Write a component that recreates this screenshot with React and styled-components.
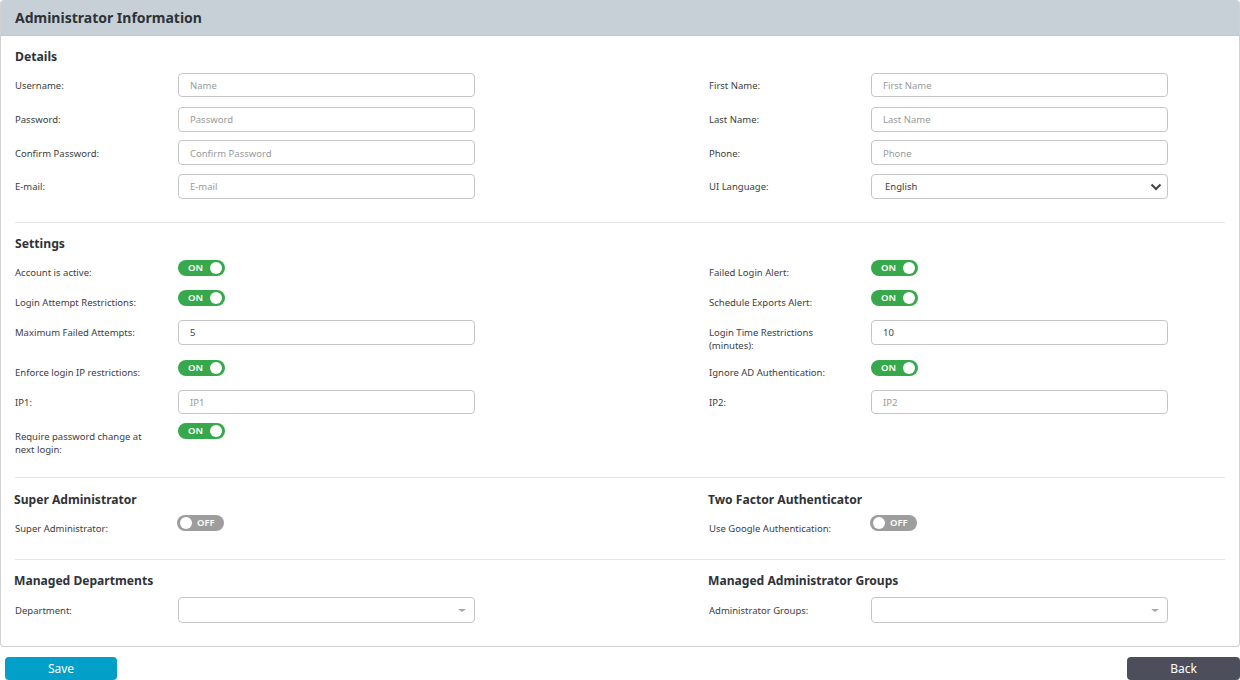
import React from "react";
import styled, { createGlobalStyle } from "styled-components";

const Global = createGlobalStyle`
  html, body { margin: 0; padding: 0; background: #fff; }
  body { font-family: "Noto Sans", "Open Sans", sans-serif; color: #333; overflow: hidden; }
  * { box-sizing: border-box; }
`;
const Page = styled.div`width: 1240px; height: 680px; display: flex; flex-direction: column;`;
const Panel = styled.div`
  height: 647px; border: 1px solid #d0d0d0; border-top: 0; border-radius: 4px; overflow: hidden; background: #fff;
`;
const PanelHeader = styled.h1`
  margin: 0 -1px; height: 36px; background: #c8d0d7; padding-left: 15px; display: flex; align-items: center;
  font-size: 14px; font-weight: 700; color: #2d3238; border-bottom: 1px solid #c2cad1;
`;
const Section = styled.section`
  padding: ${p => p.$pt}px 14px 0 14px;
`;
const Divider = styled.hr`
  margin: ${p => p.$mt}px 14px 0 14px; border: 0; border-top: 1px solid #e4e4e4;
`;
const Title = styled.h2`
  margin: 0; font-size: 12.2px; line-height: 18px; font-weight: 700; color: #2f3338;
`;
const SubTitle = styled(Title)`
  margin-left: -1px; font-size: 12.1px;
`;
const TwoCol = styled.div`
  display: grid; grid-template-columns: 694px 1fr; margin-top: ${p => p.$mt ?? 0}px;
`;
const Field = styled.div`
  display: grid; grid-template-columns: 163px 297px; align-items: start; min-height: ${p => p.$h ?? 0}px;
`;
const RightField = styled(Field)`grid-template-columns: 162px 297px;`;
const Label = styled.label`
  font-size: 9.5px; line-height: 13px; color: #3d3d3d; padding-top: ${p => p.$pt ?? 6}px; padding-right: 10px;
`;
const TextInput = styled.input`
  width: 297px; height: ${p => p.$h ?? 25}px; border: 1px solid #c6c6c6; border-radius: 4px;
  padding: ${p => p.$nudge ?? 0}px 11px 0;
  font: 9.5px "Noto Sans", sans-serif; color: #444; background: #fff; outline: none;
  &::placeholder { color: #9a9a9a; opacity: 1; }
`;
const SelectBox = styled.div`
  width: 297px; height: ${p => p.$h ?? 25}px; border: 1px solid #c6c6c6; border-radius: 4px; padding: 0 5px 0 13px;
  display: flex; align-items: center; justify-content: space-between; font-size: 9.5px; color: #3d3d3d; background: #fff;
`;
const ChevronIcon = () => (
  <svg width="12" height="8" viewBox="0 0 12 8"><path d="M1.500 1.500 6 6l4.500-4.500" fill="none" stroke="#444" strokeWidth="2" /></svg>
);
const Caret = styled.span`
  width: 0; height: 0; margin-right: 3px; border-left: 4px solid transparent; border-right: 4px solid transparent; border-top: 3.500px solid #a6a6a6;
`;
const Track = styled.div`
  position: relative; width: 47px; height: 16px; border-radius: 8px; background: ${p => (p.$on ? "#38a84c" : "#9d9d9d")};
  color: #fff; font-size: 9.5px; font-weight: 600; line-height: 16px; margin-left: ${p => (p.$on ? 0 : -1)}px;
  padding-left: ${p => (p.$on ? 10 : 20)}px;
  &::after {
    content: ""; position: absolute; top: 2px; ${p => (p.$on ? "right: 3px" : "left: 3px")};
    width: 12px; height: 12px; border-radius: 50%; background: #fff;
  }
`;
const Toggle = ({ on = true }) => <Track $on={on}>{on ? "ON" : "OFF"}</Track>;
const Footer = styled.div`
  flex: 1; display: flex; justify-content: space-between; align-items: flex-end; padding-left: 5px;
`;
const Button = styled.button`
  width: ${p => p.$w}px; height: 23px; border: 0; border-radius: 4px; background: ${p => p.$bg}; color: #fff;
  font: 12px "Noto Sans", sans-serif; padding: 0;
`;
const Blank = styled.div``;

const InputField = ({ right, label, ph, val, rowH, h, nudge, labelPt }) => {
  const F = right ? RightField : Field;
  return <F $h={rowH}><Label $pt={labelPt}>{label}</Label><TextInput $h={h} $nudge={nudge} placeholder={ph} defaultValue={val} /></F>;
};
const ToggleField = ({ right, label, on, rowH, pt = 6 }) => {
  const F = right ? RightField : Field;
  return <F $h={rowH}><Label $pt={pt}>{label}</Label><Toggle on={on} /></F>;
};

export default function App() {
  return (
    <Page>
      <Global />
      <Panel>
        <PanelHeader>Administrator Information</PanelHeader>
        <Section $pt={12}>
          <Title>Details</Title>
          <TwoCol $mt={7}>
            <InputField label="Username:" ph="Name" rowH={34} h={24} />
            <InputField right label="First Name:" ph="First Name" rowH={34} h={24} />
            <InputField label="Password:" ph="Password" rowH={33} />
            <InputField right label="Last Name:" ph="Last Name" rowH={33} />
            <InputField label="Confirm Password:" ph="Confirm Password" rowH={34} nudge={1} labelPt={7} />
            <InputField right label="Phone:" ph="Phone" rowH={34} nudge={1} labelPt={7} />
            <InputField label="E-mail:" ph="E-mail" rowH={25} />
            <RightField $h={25}><Label>UI Language:</Label><SelectBox>English<ChevronIcon /></SelectBox></RightField>
          </TwoCol>
        </Section>
        <Divider $mt={23} />
        <Section $pt={12}>
          <Title>Settings</Title>
          <TwoCol $mt={7}>
            <ToggleField label="Account is active:" rowH={30} />
            <ToggleField right label="Failed Login Alert:" rowH={30} />
            <ToggleField label="Login Attempt Restrictions:" rowH={30} />
            <ToggleField right label="Schedule Exports Alert:" rowH={30} />
            <InputField label="Maximum Failed Attempts:" val="5" rowH={40} />
            <InputField right label={<>Login Time Restrictions<br />(minutes):</>} val="10" rowH={40} />
            <ToggleField label="Enforce login IP restrictions:" rowH={30} />
            <ToggleField right label="Ignore AD Authentication:" rowH={30} />
            <InputField label="IP1:" ph="IP1" rowH={33} h={24} />
            <InputField right label="IP2:" ph="IP2" rowH={33} h={24} />
            <ToggleField label={<>Require password change at<br />next login:</>} pt={7} />
            <Blank />
          </TwoCol>
        </Section>
        <Divider $mt={21} />
        <Section $pt={13}>
          <TwoCol>
            <SubTitle>Super Administrator</SubTitle>
            <SubTitle>Two Factor Authenticator</SubTitle>
          </TwoCol>
          <TwoCol $mt={6}>
            <ToggleField label="Super Administrator:" on={false} pt={7} />
            <ToggleField right label="Use Google Authentication:" on={false} pt={7} />
          </TwoCol>
        </Section>
        <Divider $mt={24} />
        <Section $pt={12}>
          <TwoCol>
            <SubTitle>Managed Departments</SubTitle>
            <SubTitle>Managed Administrator Groups</SubTitle>
          </TwoCol>
          <TwoCol $mt={7}>
            <Field><Label $pt={7}>Department:</Label><SelectBox $h={26}><Blank /><Caret /></SelectBox></Field>
            <RightField><Label $pt={7}>Administrator Groups:</Label><SelectBox $h={26}><Blank /><Caret /></SelectBox></RightField>
          </TwoCol>
        </Section>
      </Panel>
      <Footer>
        <Button $w={112} $bg="#029fc9">Save</Button>
        <Button $w={113} $bg="#4d4e5c">Back</Button>
      </Footer>
    </Page>
  );
}
